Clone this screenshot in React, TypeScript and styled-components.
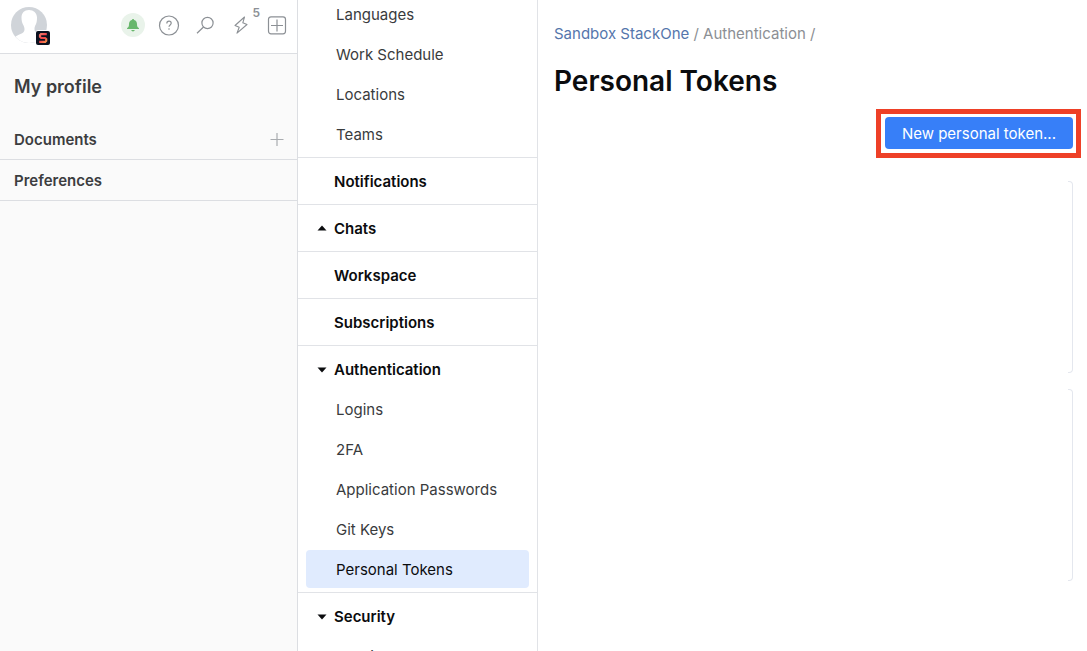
import React from "react";
import styled, { createGlobalStyle, css } from "styled-components";

const GlobalStyle = createGlobalStyle`
  *, *::before, *::after { box-sizing: border-box; }
  body {
    margin: 0;
    background: #fff;
    color: #0b0c0e;
    font-family: Inter, "Liberation Sans", sans-serif;
    font-size: 15px;
    line-height: 22px;
    overflow: hidden;
  }
  h1, h2, ul { margin: 0; padding: 0; }
  ul { list-style: none; }
  a { color: inherit; text-decoration: none; }
  button { font: inherit; border: 0; padding: 0; background: none; cursor: pointer; }
  svg { display: block; }
`;

const Page = styled.div`
  display: grid;
  grid-template-columns: 298px 240px minmax(0, 1fr);
  height: 100vh;
`;

const Sidebar = styled.aside`
  background: #fafafa;
  border-right: 1px solid #dcdee2;
`;

const Toolbar = styled.header`
  display: flex;
  align-items: center;
  justify-content: space-between;
  height: 54px;
  padding: 0 8px 3px 11px;
  background: #fff;
  border-bottom: 1px solid #dcdee2;
`;

const AvatarButton = styled.button`
  position: relative;
  width: 36px;
  height: 36px;
`;

const WorkspaceBadge = styled.span`
  position: absolute;
  right: -4px;
  bottom: -3px;
  border: 1px solid #fff;
  border-radius: 3px;
`;

const Tools = styled.div`
  display: flex;
  align-items: center;
  gap: 12px;
`;

const ToolButton = styled.button<{ $round?: boolean }>`
  position: relative;
  display: grid;
  place-items: center;
  width: 24px;
  height: 24px;
  color: #8c9095;
  ${({ $round }) => $round && css`
    border-radius: 50%;
    background: #e9f3ea;
    color: #68b76c;
  `}
`;

const Count = styled.span`
  position: absolute;
  top: -11px;
  right: -7px;
  font-size: 12px;
  font-weight: 600;
`;

const ProfileTitle = styled.h2`
  padding: 20px 14px 19px;
  font-size: 18px;
  line-height: 26px;
  font-weight: 600;
  color: #3c3d3f;
`;

const ProfileRow = styled.li`
  display: flex;
  align-items: center;
  justify-content: space-between;
  height: 41px;
  padding: 2px 13px 0 14px;
  border-bottom: 1px solid #dcdee2;
  font-weight: 600;
  color: #3c3d3f;
`;

const AddButton = styled.button`
  color: #a9acb0;
`;

const SettingsNav = styled.nav`
  overflow: hidden;
  border-right: 1px solid #e1e3e7;
`;

const ScrolledContent = styled.div`
  margin-top: -6px;
`;

const Section = styled.section`
  border-bottom: 1px solid #e1e3e7;
`;

const SectionToggle = styled.button<{ $withItems: boolean }>`
  display: flex;
  align-items: center;
  gap: 7px;
  width: 100%;
  padding: 12px 19px ${({ $withItems }) => ($withItems ? 7 : 10)}px;
  font-weight: 600;
  line-height: 24px;
  color: #0b0c0e;
`;

const ItemList = styled.ul`
  padding: 0 8px 3px;
`;

const ItemLink = styled.a<{ $active: boolean }>`
  display: block;
  margin: 1px 0;
  padding: 8px 30px 6px;
  line-height: 24px;
  border-radius: 4px;
  background: ${({ $active }) => ($active ? "#e0ebfe" : "transparent")};
  color: ${({ $active }) => ($active ? "#0b0c0e" : "#393b3d")};
`;

const ItemRow = styled.li`
  display: flow-root;
`;

const Main = styled.main`
  padding: 23px 6px 0 16px;
`;

const Breadcrumbs = styled.nav`
  color: #8c8f94;
`;

const CrumbLink = styled.a`
  color: #5576ac;
`;

const PageTitle = styled.h1`
  margin-top: 18px;
  font-size: 28px;
  line-height: 36px;
  font-weight: 600;
`;

const Actions = styled.div`
  display: flex;
  justify-content: flex-end;
  margin-top: 10px;
`;

const Highlight = styled.div`
  padding: 3px 3px 4px 4px;
  border: 5px solid #ee4027;
`;

const PrimaryButton = styled.button`
  height: 32px;
  padding: 2px 17px 0;
  border-radius: 4px;
  background: #377ff8;
  color: #fff;
`;

const Cards = styled.div`
  display: grid;
  justify-content: end;
  gap: 16px;
  margin-top: 23px;
  padding-right: 8px;
`;

const CardEdge = styled.div`
  width: 5px;
  height: 192px;
  border: 1px solid #e4e7ee;
  border-left: 0;
  border-radius: 0 4px 4px 0;
`;

type NavSection = { title?: string; arrow?: "up" | "down"; items?: string[] };

const sections: NavSection[] = [
  { items: ["Languages", "Work Schedule", "Locations", "Teams"] },
  { title: "Notifications" },
  { title: "Chats", arrow: "up" },
  { title: "Workspace" },
  { title: "Subscriptions" },
  {
    title: "Authentication",
    arrow: "down",
    items: ["Logins", "2FA", "Application Passwords", "Git Keys", "Personal Tokens"],
  },
  { title: "Security", arrow: "down", items: ["Sessions"] },
];

const Arrow = ({ dir }: { dir?: "up" | "down" }) => (
  <svg width="10" height="8" viewBox="0 0 10 8" fill="currentColor" aria-hidden="true">
    {dir === "up" && <path d="M.5 5.500 5 .5l4.500 5z" />}
    {dir === "down" && <path d="M.5 1.500h9L5 6.500z" />}
  </svg>
);

const Avatar = () => (
  <svg width="36" height="36" viewBox="0 0 36 36" aria-hidden="true">
    <circle cx="18" cy="18" r="18" fill="#d0d4d9" />
    <path
      d="M18 3c-4.800 0-7.500 3-7.500 7.500 0 3 .5 5 1.500 7 1 1.800 1.500 3 1.500 5 0 2.500-1.500 3.500-4 4.500-2.500 1-4 1.800-5 2.800C8 34 12.500 36 18 36s12-3 14.500-7c-2-2-4.500-2.500-7-3.500-1.500-.7-2-1.700-2-3.500s.5-3 1.300-4.500c1-2 1.200-4.200 1.200-7C26 6 22.500 3 18 3z"
      fill="#fff"
    />
  </svg>
);

const WorkspaceLogo = () => (
  <svg width="14" height="14" viewBox="0 0 14 14" aria-hidden="true">
    <defs>
      <linearGradient id="logo" x1="0" y1="0" x2="1" y2="1">
        <stop offset="0" stopColor="#f2806c" />
        <stop offset=".5" stopColor="#f0404a" />
        <stop offset="1" stopColor="#f6914c" />
      </linearGradient>
    </defs>
    <rect width="14" height="14" rx="2" fill="#0c1220" />
    <path d="M10.800 3.200H5L4 4.200v1.600L5.200 7h3.800l1.200 1v1.800l-1 1H3.200" fill="none" stroke="url(#logo)" strokeWidth="2.200" />
  </svg>
);

const Bell = () => (
  <svg width="14" height="14" viewBox="0 0 14 14" fill="currentColor" aria-hidden="true">
    <path d="M7 1c.7 0 1 .4 1.100.9 2 .5 2.900 2.100 2.900 4.100 0 2.300.4 3 1.500 3.800.4.300.5.600.5 1.200H1c0-.6.100-.9.500-1.200C2.600 9 3 8.300 3 6c0-2 .9-3.600 2.900-4.100C6 1.400 6.300 1 7 1zM5.200 12h3.600c-.2.900-.9 1.400-1.800 1.400S5.400 12.900 5.200 12z" />
  </svg>
);

const Help = () => (
  <svg width="22" height="22" viewBox="0 0 22 22" fill="none" stroke="currentColor" aria-hidden="true">
    <circle cx="11" cy="11.500" r="9.500" strokeWidth="1.200" />
    <path d="M8.800 9.500c0-1.500 1-2.300 2.200-2.300s2.200.8 2.200 2c0 1.700-2.200 1.800-2.200 3.600" strokeWidth="1.200" />
    <circle cx="11" cy="15" r=".8" fill="currentColor" stroke="none" />
  </svg>
);

const Search = () => (
  <svg width="18" height="18" viewBox="0 0 18 18" fill="none" stroke="currentColor" strokeWidth="1.200" aria-hidden="true">
    <circle cx="11.500" cy="7" r="5.600" />
    <path d="M7.500 11 1 17.200" />
  </svg>
);

const Bolt = () => (
  <svg width="16" height="18" viewBox="0 0 16 18" fill="none" stroke="currentColor" strokeWidth="1.100" strokeLinejoin="round" aria-hidden="true">
    <path d="M11.500 1 2 9.500l4.200 1.700L4 17.200l10-8.700-4.200-1.700z" />
  </svg>
);

const AddBox = () => (
  <svg width="20" height="20" viewBox="0 0 20 20" fill="none" stroke="currentColor" strokeWidth="1.200" aria-hidden="true">
    <rect x="1.500" y="1.800" width="17" height="17" rx="2.500" />
    <path d="M10 4.500v12M4 10.500h12" />
  </svg>
);

const Plus = () => (
  <svg width="14" height="14" viewBox="0 0 14 14" stroke="currentColor" strokeWidth="1.200" aria-hidden="true">
    <path d="M7 0v13M.5 6.500h13" />
  </svg>
);

export default function App() {
  return (
    <>
      <GlobalStyle />
      <Page>
        <Sidebar>
          <Toolbar>
            <AvatarButton aria-label="Account">
              <Avatar />
              <WorkspaceBadge><WorkspaceLogo /></WorkspaceBadge>
            </AvatarButton>
            <Tools>
              <ToolButton $round aria-label="Inbox"><Bell /></ToolButton>
              <ToolButton aria-label="Help"><Help /></ToolButton>
              <ToolButton aria-label="Search"><Search /></ToolButton>
              <ToolButton aria-label="Recent activity"><Bolt /><Count>5</Count></ToolButton>
              <ToolButton aria-label="Create"><AddBox /></ToolButton>
            </Tools>
          </Toolbar>
          <ProfileTitle>My profile</ProfileTitle>
          <ul>
            <ProfileRow>
              <a href="#documents">Documents</a>
              <AddButton aria-label="Add document"><Plus /></AddButton>
            </ProfileRow>
            <ProfileRow><a href="#preferences">Preferences</a></ProfileRow>
          </ul>
        </Sidebar>
        <SettingsNav aria-label="Settings">
          <ScrolledContent>
            {sections.map(({ title, arrow, items }, i) => (
              <Section key={i}>
                {title && (
                  <SectionToggle $withItems={!!items}>
                    <Arrow dir={arrow} />
                    {title}
                  </SectionToggle>
                )}
                {items && (
                  <ItemList>
                    {items.map((item) => (
                      <ItemRow key={item}>
                        <ItemLink href="#settings" $active={item === "Personal Tokens"}>{item}</ItemLink>
                      </ItemRow>
                    ))}
                  </ItemList>
                )}
              </Section>
            ))}
          </ScrolledContent>
        </SettingsNav>
        <Main>
          <Breadcrumbs aria-label="Breadcrumb">
            <CrumbLink href="#workspace">Sandbox StackOne</CrumbLink> / <a href="#authentication">Authentication</a> /
          </Breadcrumbs>
          <PageTitle>Personal Tokens</PageTitle>
          <Actions>
            <Highlight><PrimaryButton>New personal token...</PrimaryButton></Highlight>
          </Actions>
          <Cards>
            <CardEdge />
            <CardEdge />
          </Cards>
        </Main>
      </Page>
    </>
  );
}
